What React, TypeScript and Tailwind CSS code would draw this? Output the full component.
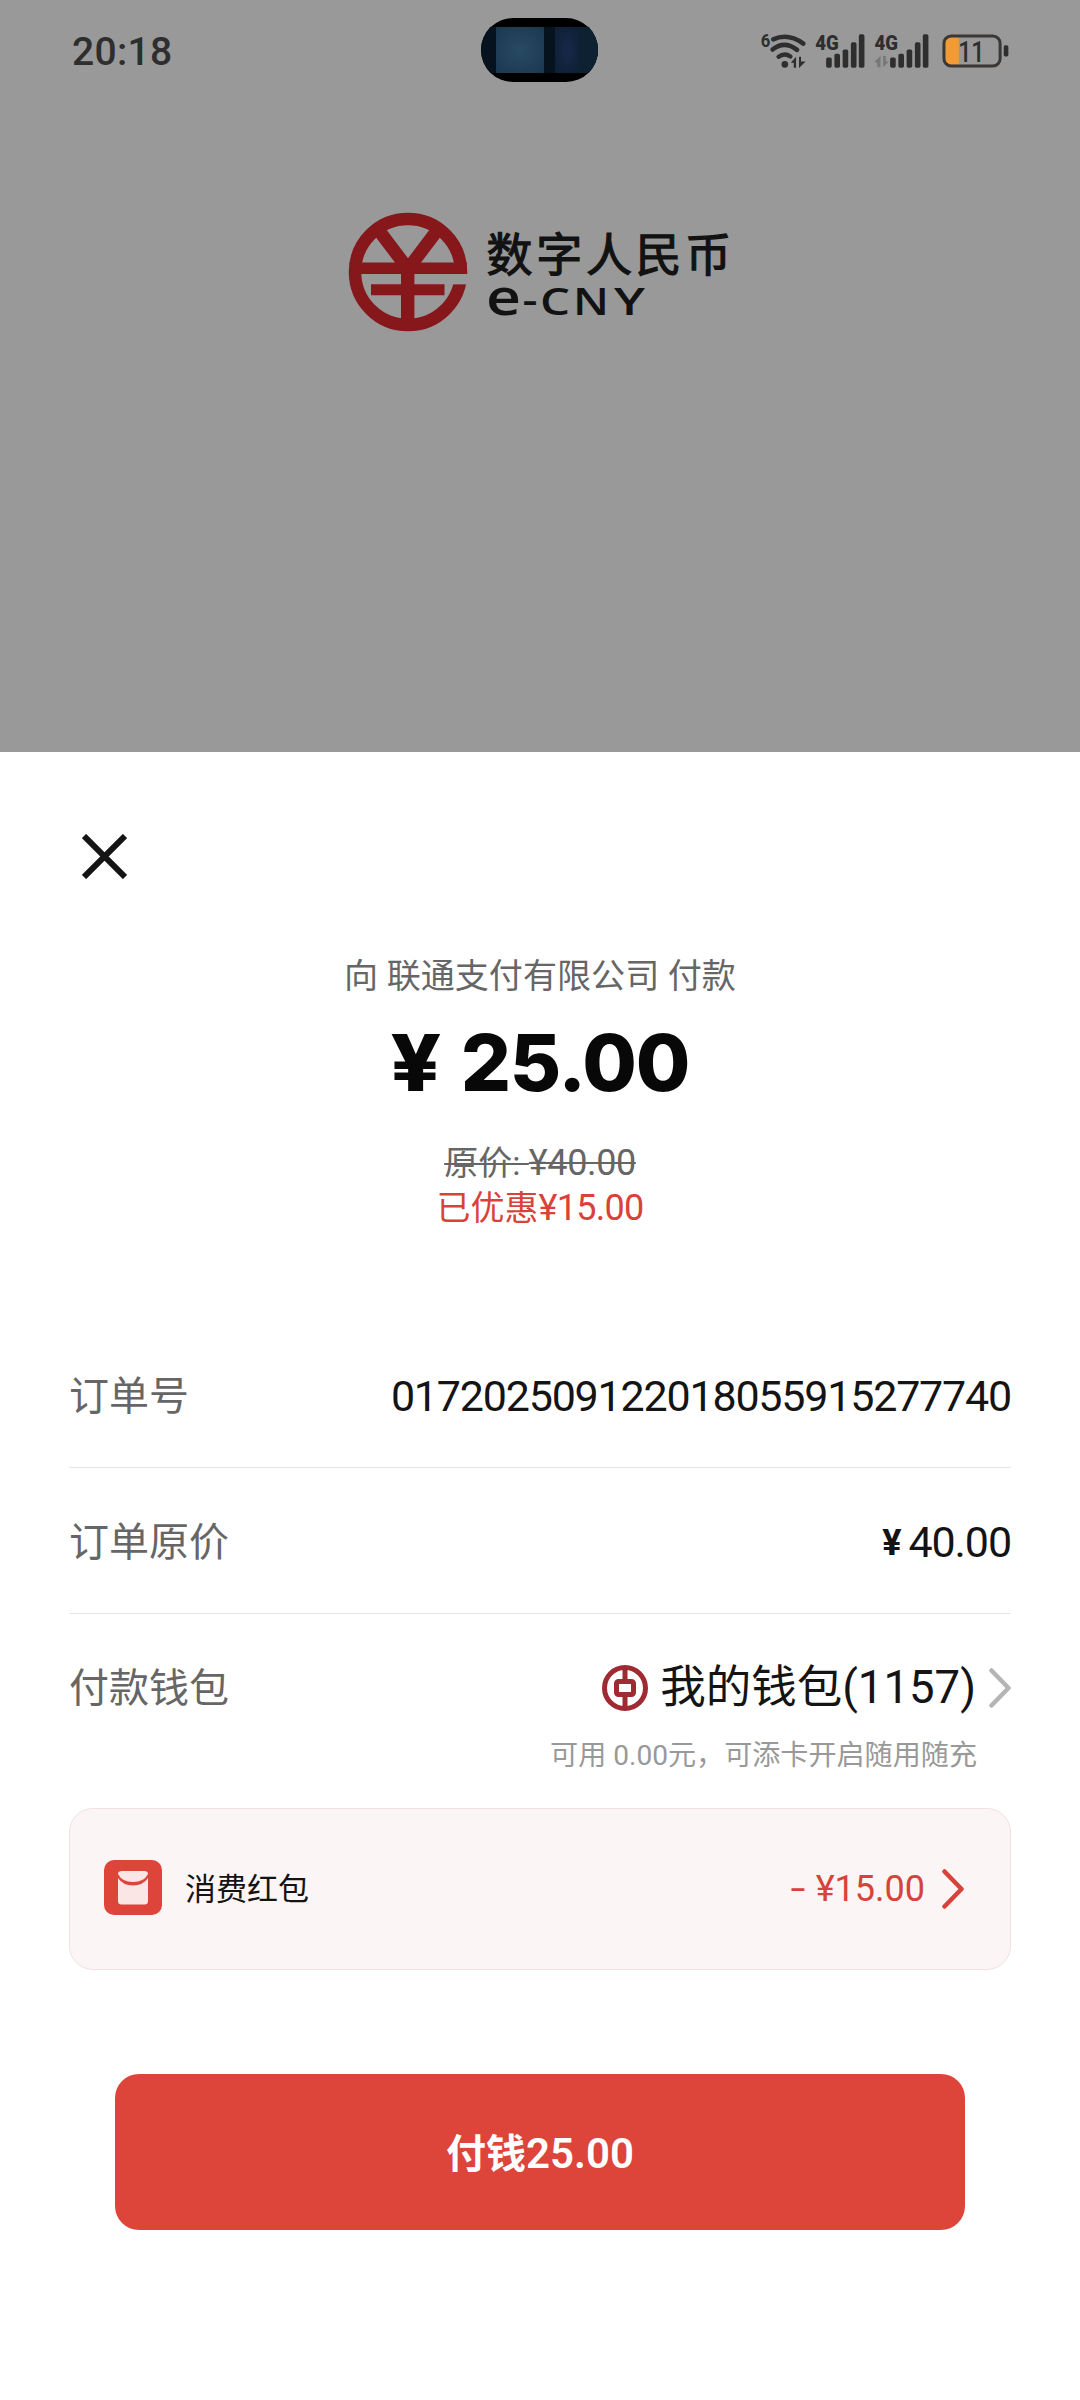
import type { ReactNode } from "react";

function WifiIcon() {
  return (
    <svg viewBox="62 64 140 112" className="w-[47px] h-[37px] overflow-visible" fill="none" stroke="#2e2e2e" strokeLinecap="round">
      <text x="63" y="109" fontSize="56" fontWeight="700" fontFamily="Roboto, sans-serif" textLength="29" lengthAdjust="spacingAndGlyphs" fill="#2e2e2e" stroke="none">6</text>
      <path d="M101 86 Q146 66 192 99" strokeWidth="14" />
      <path d="M99 117 Q135 88 173 118" strokeWidth="14" />
      <path d="M117 139 Q135 126 153 138" strokeWidth="13" />
      <circle cx="136" cy="162" r="10" fill="#2e2e2e" stroke="none" />
      <path d="M154 157 L170 139 V172 H163 V157 Z M179 139 H185 V153 L199 153 L179 173 Z" fill="#2e2e2e" stroke="none" />
    </svg>
  );
}

const signalBars = [
  [261, 141],
  [286, 130],
  [311, 117],
  [336, 95],
  [360, 71],
];

function SignalIcon({ arrows = false }: { arrows?: boolean }) {
  return (
    <svg
      viewBox={arrows ? "403 64 171 112" : "225 64 156 112"}
      className={arrows ? "w-[57px] h-[37px] overflow-visible" : "w-[52px] h-[37px] overflow-visible"}
      fill="#2e2e2e"
    >
      <text x={arrows ? 407 : 228} y="119" fontSize="64" fontWeight="900" fontFamily="Roboto, sans-serif" textLength="71" lengthAdjust="spacingAndGlyphs">4G</text>
      {signalBars.map(([x, y]) => (
        <rect key={x} x={arrows ? x + 193 : x} y={y} width="17" height={172 - y} rx="5" />
      ))}
      {arrows && <path d="M406 155 L425 137 V171 H415 V157 Z M433 137 V171 L450 153 H441 V137 Z" fill="#777" />}
    </svg>
  );
}

function BatteryIcon() {
  return (
    <svg viewBox="606 64 207 112" className="w-[69px] h-[37px] overflow-visible">
      <path d="M659 80 V163 H636 Q618 163 618 146 V98 Q618 80 636 80 Z" fill="#f39b33" />
      <rect x="614" y="76" width="170" height="91" rx="22" fill="none" stroke="#3a3735" strokeWidth="9" />
      <rect x="795" y="104" width="14" height="34" rx="5" fill="#2e2e2e" />
      <text x="657" y="154" fontSize="88" fontWeight="500" fontFamily="Roboto, sans-serif" textLength="80" lengthAdjust="spacingAndGlyphs" fill="#2e2e2e">11</text>
    </svg>
  );
}

function StatusBar() {
  return (
    <header className="relative flex items-start justify-between h-[100px] pl-[72px] pr-[70px] pt-[32px] text-[#2e2e2e]">
      <span className="text-[39px] leading-[40px] font-medium tracking-[0.300px]">20:18</span>
      <div className="flex items-center">
        <WifiIcon />
        <div className="w-[7px]" />
        <SignalIcon />
        <div className="w-[7px]" />
        <SignalIcon arrows />
        <div className="w-[11px]" />
        <BatteryIcon />
      </div>
      {/* camera cutout */}
      <div className="absolute left-[481px] top-[18px] w-[117px] h-[64px] rounded-[32px] bg-black overflow-hidden">
        <div className="flex mt-[9px] h-[46px] bg-[#06121d]">
          <div className="ml-[15px] w-[48px] bg-radial from-[#284a63] to-[#1b3850]" />
          <div className="ml-[11px] w-[24px] bg-radial from-[#16294a] to-[#0d1f32]" />
          <div className="flex-1 bg-[#0d2133]" />
        </div>
      </div>
    </header>
  );
}

function Logo() {
  return (
    <svg viewBox="0 0 384 122" className="w-[384px] h-[122px] overflow-visible">
      <g fill="none" stroke="#86171b">
        <circle cx="60" cy="61" r="53" strokeWidth="12.5" />
        <path d="M100 68.200 H122" stroke="#999" strokeWidth="10.400" />
        <path d="M12 57.300 H118.800" strokeWidth="11.400" />
        <path d="M23 78.700 H96.500" strokeWidth="11" />
        <path d="M29 17 L60 58 L91 17" strokeWidth="13" />
        <path d="M59.700 54 V112" strokeWidth="13.400" />
      </g>
      <g fill="#121212">
        <text x="138.500" y="60" fontSize="46" fontWeight="400" fontFamily="'Noto Sans CJK SC', sans-serif" letterSpacing="3.700" stroke="#121212" strokeWidth="1.200">
          数字人民币
        </text>
        <g fontFamily="'Open Sans', sans-serif" fontWeight="600" fontSize="38.500">
          <text x="138" y="104" fontSize="51" textLength="35" lengthAdjust="spacingAndGlyphs">e</text>
          <text x="174.500" y="101.500" textLength="15" lengthAdjust="spacingAndGlyphs">-</text>
          <text x="192" y="104" textLength="30" lengthAdjust="spacingAndGlyphs">C</text>
          <text x="225" y="104" textLength="36" lengthAdjust="spacingAndGlyphs">N</text>
          <text x="266" y="104" textLength="31" lengthAdjust="spacingAndGlyphs">Y</text>
        </g>
      </g>
    </svg>
  );
}

function Chevron({ className }: { className: string }) {
  return (
    <svg viewBox="0 0 22 40" className={className} fill="none" stroke="currentColor" strokeWidth="4.500" strokeLinecap="round" strokeLinejoin="round">
      <path d="M2.500 2.500 L19.500 20 L2.500 37.500" />
    </svg>
  );
}

function BankIcon() {
  return (
    <svg viewBox="0 0 46 46" className="w-[46px] h-[46px]" fill="none" stroke="#9f2a31">
      <circle cx="23" cy="23" r="20.500" strokeWidth="5" />
      <rect x="14.500" y="16.500" width="17" height="13" rx="2" strokeWidth="5" />
      <path d="M23 3 V15 M23 31 V43" strokeWidth="5" />
    </svg>
  );
}

function RedPacketIcon() {
  return (
    <svg viewBox="0 0 58 55" className="w-[58px] h-[55px] mb-[3px]">
      <rect width="58" height="55" rx="10" fill="#dd443a" />
      <path d="M14 14 Q14 11 18 11 H40 Q44 11 44 14 Q40 22 29 22 Q18 22 14 14 Z" fill="#fbe6e6" />
      <path d="M14 18 Q19 25.500 29 25.500 Q39 25.500 44 18 V41 Q44 44.500 40.500 44.500 H17.500 Q14 44.500 14 41 Z" fill="#fbe6e6" />
    </svg>
  );
}

function Row({ label, children }: { label: string; children: ReactNode }) {
  return (
    <div className="flex items-center justify-between h-[146px] pt-[5px] border-b-1 border-[#e5e5e5]">
      <span className="text-[40px] text-[#666]">{label}</span>
      {children}
    </div>
  );
}

export default function App() {
  return (
    <main className="w-[1080px] h-[2400px] bg-[#999] flex flex-col overflow-hidden whitespace-nowrap font-[Roboto,'Noto_Sans_CJK_SC',sans-serif]">
      <StatusBar />
      <div className="h-[652px] pt-[111px] pl-[348px]">
        <Logo />
      </div>

      <section className="flex-1 bg-white px-[69px] text-[#141414]">
        <button className="block pt-[82px] pl-[13px]">
          <svg viewBox="0 0 45 45" className="w-[45px] h-[45px]" stroke="#141414" strokeWidth="6">
            <path d="M2 2 L43 43 M43 2 L2 43" />
          </svg>
        </button>

        <div className="mt-[72px] flex flex-col items-center">
          <p className="text-[34.100px] leading-[50px] text-[#666]">向 联通支付有限公司 付款</p>
          <p className="mt-[21px] flex h-[80px] pl-[2px] text-[79px] leading-[80px] font-extrabold text-[#080808] font-[Inter,sans-serif]">
            <span className="inline-block scale-x-112 mr-[22px]">¥</span>
            <span className="tracking-[-1.300px]">25.00</span>
          </p>
          <p className="mt-[39px] text-[34px] leading-[45px] text-[#666] line-through decoration-2">
            原价: <span className="text-[36px] tracking-[-0.400px]">¥40.00</span>
          </p>
          <p className="text-[34px] leading-[45px] text-[#d9423a]">
            已优惠<span className="text-[36px] tracking-[-0.700px]">¥15.00</span>
          </p>
        </div>

        <div className="mt-[91px]">
          <Row label="订单号">
            <span className="pb-[2px] text-[43px] tracking-[-1.200px]">017202509122018055915277740</span>
          </Row>
          <Row label="订单原价">
            <span className="pb-[2px] text-[43px] tracking-[-1.100px]">
              <span className="relative bottom-[2px] text-[36px] font-bold mr-[8px]">¥</span>40.00
            </span>
          </Row>
          <div className="flex items-start justify-between h-[194px] pt-[43px]">
            <span className="text-[40px] leading-[64px] text-[#666]">付款钱包</span>
            <div>
              <div className="flex items-center justify-end h-[62px]">
                <BankIcon />
                <span className="ml-[12px] text-[45.500px] leading-[62px]">我的钱包(1157)</span>
                <Chevron className="ml-[13px] w-[22px] h-[40px] text-[#b5b5b5]" />
              </div>
              <p className="mt-[16px] pr-[34px] text-right text-[28.100px] leading-[42px] text-[#999]">
                可用 0.00元，可添卡开启随用随充
              </p>
            </div>
          </div>
        </div>

        <div className="flex items-center h-[162px] pl-[34px] pr-[46px] rounded-[24px] border border-[#f0e2e2] bg-[#fcf5f5]">
          <RedPacketIcon />
          <span className="ml-[23px] pt-[2px] text-[31px]">消费红包</span>
          <span className="ml-auto text-[36px] text-[#d9423a]">
            <span className="inline-block scale-x-150 mr-[4px]">-</span> ¥15.00
          </span>
          <Chevron className="ml-[17px] w-[22px] h-[40px] text-[#d9423a]" />
        </div>

        <button className="mt-[104px] mx-[46px] w-[850px] h-[156px] pt-[2px] rounded-[24px] bg-[#dd443a] text-white text-[40px] font-bold">
          付钱<span className="text-[42px] font-semibold">25.00</span>
        </button>
      </section>
    </main>
  );
}
